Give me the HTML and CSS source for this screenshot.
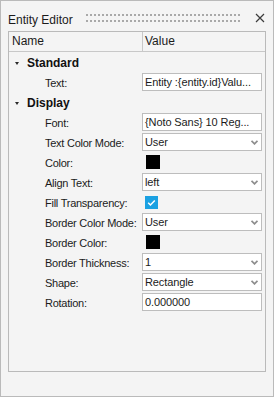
FILE: index.html
```html
<!DOCTYPE html>
<html>
<head>
<meta charset="utf-8">
<link rel="stylesheet" href="styles.css">
</head>
<body>
<div class="panel">
  <div class="titlebar">
    <span class="title">Entity Editor</span>
    <div class="grip">
      <svg width="156" height="8"><defs><pattern id="dots" width="4" height="6" patternUnits="userSpaceOnUse"><rect width="2" height="2" fill="#a9a9a9"/></pattern></defs><rect width="156" height="8" fill="url(#dots)"/></svg>
    </div>
    <svg class="close" width="10" height="10" viewBox="0 0 10 10"><path d="M1 1L9 9M9 1L1 9" stroke="#3c3c3c" stroke-width="1.2" fill="none"/></svg>
  </div>
  <div class="table">
    <div class="head">
      <div class="hname">Name</div>
      <div class="hvalue">Value</div>
    </div>
    <div class="body">
      <div class="row group"><span class="caret"></span><span class="glabel">Standard</span></div>
      <div class="row"><span class="label">Text:</span><div class="val"><div class="field">Entity :{entity.id}Valu...</div></div></div>
      <div class="row group"><span class="caret"></span><span class="glabel">Display</span></div>
      <div class="row"><span class="label">Font:</span><div class="val"><div class="field">{Noto Sans} 10 Reg...</div></div></div>
      <div class="row"><span class="label">Text Color Mode:</span><div class="val"><div class="field select">User<svg class="arrow" width="7" height="5" viewBox="0 0 7 5"><path d="M0.5 0.8L3.5 3.8L6.5 0.8" stroke="#8e8e8e" stroke-width="1.8" fill="none"/></svg></div></div></div>
      <div class="row"><span class="label">Color:</span><div class="val"><div class="swatch"></div></div></div>
      <div class="row"><span class="label">Align Text:</span><div class="val"><div class="field select">left<svg class="arrow" width="7" height="5" viewBox="0 0 7 5"><path d="M0.5 0.8L3.5 3.8L6.5 0.8" stroke="#8e8e8e" stroke-width="1.8" fill="none"/></svg></div></div></div>
      <div class="row"><span class="label">Fill Transparency:</span><div class="val"><div class="check"><svg width="13" height="13" viewBox="0 0 13 13"><path d="M3.2 6.8L5.4 9L9.8 4.4" stroke="#fff" stroke-width="1.5" fill="none"/></svg></div></div></div>
      <div class="row"><span class="label">Border Color Mode:</span><div class="val"><div class="field select">User<svg class="arrow" width="7" height="5" viewBox="0 0 7 5"><path d="M0.5 0.8L3.5 3.8L6.5 0.8" stroke="#8e8e8e" stroke-width="1.8" fill="none"/></svg></div></div></div>
      <div class="row"><span class="label">Border Color:</span><div class="val"><div class="swatch"></div></div></div>
      <div class="row"><span class="label">Border Thickness:</span><div class="val"><div class="field select">1<svg class="arrow" width="7" height="5" viewBox="0 0 7 5"><path d="M0.5 0.8L3.5 3.8L6.5 0.8" stroke="#8e8e8e" stroke-width="1.8" fill="none"/></svg></div></div></div>
      <div class="row"><span class="label">Shape:</span><div class="val"><div class="field select">Rectangle<svg class="arrow" width="7" height="5" viewBox="0 0 7 5"><path d="M0.5 0.8L3.5 3.8L6.5 0.8" stroke="#8e8e8e" stroke-width="1.8" fill="none"/></svg></div></div></div>
      <div class="row"><span class="label">Rotation:</span><div class="val"><div class="field">0.000000</div></div></div>
    </div>
  </div>
</div>
</body>
</html>
```
FILE: styles.css
```css
* { box-sizing: border-box; }
html, body { margin: 0; padding: 0; }
body {
  font-family: "Liberation Sans", Arial, sans-serif;
  color: #1b1b1b;
  background: #f4f4f4;
}
.panel {
  width: 274px;
  height: 397px;
  border: 1px solid #bababa;
  background: #f4f4f4;
  display: flex;
  flex-direction: column;
}
.titlebar {
  height: 30px;
  padding: 6px 0 0 7px;
  display: flex;
  align-items: center;
}
.title {
  font-size: 12px;
  line-height: 24px;
  width: 78px;
  margin-top: 2px;
}
.grip {
  width: 156px;
  height: 8px;
  display: flex;
  margin-top: -2px;
}
.close {
  margin-left: 13px;
  margin-top: -2px;
}
.table {
  margin: 0 7px;
  height: 341px;
  border: 1px solid #bababa;
  display: flex;
  flex-direction: column;
}
.head {
  height: 20px;
  border-bottom: 1px solid #c8c8c8;
  display: grid;
  grid-template-columns: 134px 1fr;
  font-size: 12px;
}
.hname {
  border-right: 1px solid #c8c8c8;
  padding-left: 3px;
  line-height: 19px;
}
.hvalue {
  padding-left: 2px;
  line-height: 19px;
}
.body {
  padding-top: 1px;
  display: flex;
  flex-direction: column;
}
.row {
  height: 20px;
  display: grid;
  grid-template-columns: 133px 1fr;
  align-items: center;
  font-size: 11px;
}
.row.group {
  display: flex;
  align-items: center;
}
.caret {
  width: 0;
  height: 0;
  margin-left: 6px;
  border-left: 2.5px solid transparent;
  border-right: 2.5px solid transparent;
  border-top: 3px solid #2a2a2a;
}
.glabel {
  margin-left: 8px;
  font-weight: bold;
  font-size: 12px;
  color: #111;
}
.label {
  padding-left: 36px;
  white-space: nowrap;
  letter-spacing: -0.25px;
}
.val {
  height: 20px;
  display: flex;
  align-items: flex-start;
}
.field {
  width: 120px;
  height: 18px;
  border: 1px solid #bdbdbd;
  background: #fff;
  padding-left: 2px;
  line-height: 16px;
  font-size: 11px;
  letter-spacing: -0.1px;
  white-space: nowrap;
  overflow: hidden;
  display: flex;
  align-items: center;
}
.field.select { justify-content: space-between; padding-right: 3px; }
.arrow { flex: none; }
.swatch {
  width: 14px;
  height: 14px;
  background: #000;
  margin: 2px 0 0 4px;
}
.check {
  width: 13px;
  height: 13px;
  background: #1ba1e2;
  margin: 3px 0 0 3px;
  display: flex;
}
```
